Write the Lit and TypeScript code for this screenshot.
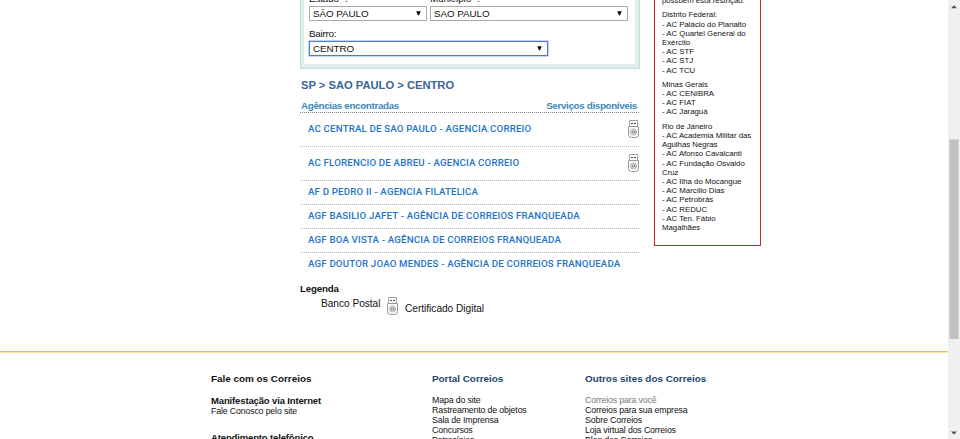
import { LitElement, html, css, svg } from "lit";
import { customElement } from "lit/decorators.js";
import { classMap } from "lit/directives/class-map.js";

const AGENCIES = [
  { name: "AC CENTRAL DE SAO PAULO - AGENCIA CORREIO", digital: true },
  { name: "AC FLORENCIO DE ABREU - AGENCIA CORREIO", digital: true },
  { name: "AF D PEDRO II - AGENCIA FILATELICA", digital: false },
  { name: "AGF BASILIO JAFET - AGÊNCIA DE CORREIOS FRANQUEADA", digital: false },
  { name: "AGF BOA VISTA - AGÊNCIA DE CORREIOS FRANQUEADA", digital: false },
  { name: "AGF DOUTOR JOAO MENDES - AGÊNCIA DE CORREIOS FRANQUEADA", digital: false },
];

const RESTRICTED = [
  ["possuem esta restrição."],
  ["Distrito Federal:", "- AC Palácio do Planalto", "- AC Quartel General do", "Exército", "- AC STF", "- AC STJ", "- AC TCU"],
  ["Minas Gerais", "- AC CENIBRA", "- AC FIAT", "- AC Jaraguá"],
  ["Rio de Janeiro", "- AC Academia Militar das", "Agulhas Negras", "- AC Afonso Cavalcanti", "- AC Fundação Osvaldo", "Cruz", "- AC Ilha do Mocangue", "- AC Marcílio Dias", "- AC Petrobrás", "- AC REDUC", "- AC Ten. Fábio", "Magalhães"],
];

const PORTAL = ["Mapa do site", "Rastreamento de objetos", "Sala de Imprensa", "Concursos", "Patrocínios"];
const SITES = ["Correios para você", "Correios para sua empresa", "Sobre Correios", "Loja virtual dos Correios", "Blog dos Correios"];

@customElement("usb-icon")
class UsbIcon extends LitElement {
  static styles = css`
    :host { display: block; width: 11px; height: 18px; }
    svg { display: block; }
  `;
  render() {
    return html`<svg width="11" height="18" viewBox="0 0 11 18" fill="none">${svg`
      <path d="M1.500 6.500v-6h8v6" fill="#fff" stroke="#999" stroke-width=".9"/>
      <path d="M3 3.500h2M6 3.500h2" stroke="#444" stroke-width="1"/>
      <path d="M.5 7q0-.5.5-.5h9q.5 0 .5.5v7.500q0 3-3 3h-4q-3 0-3-3Z" fill="#fafafa" stroke="#8c8c8c" stroke-width=".9"/>
      <circle cx="5.500" cy="12" r="3" stroke="#999" stroke-width=".8"/>
      <circle cx="5.400" cy="12" r="1.300" stroke="#666" stroke-width=".9"/>
      <path d="M6.800 10.700v2q.8.900 1.500-.3" stroke="#777" stroke-width=".7"/>`}</svg>`;
  }
}

@customElement("select-box")
class SelectBox extends LitElement {
  static properties = { value: {} };
  declare value: string;
  static styles = css`
    :host { display: flex; box-sizing: border-box; align-items: center; justify-content: space-between;
      border: 1px solid #a9a9a9; background: #fff; padding: 0 5px 0 3px; height: 15px;
      font: 9.800px/13px "Liberation Sans", Arial, sans-serif; letter-spacing: -.05px; color: #111; }
    :host([focused]) { border-color: #4d7cc9; box-shadow: 0 0 0 .6px #9dbcf0; }
    svg { display: block; }
  `;
  render() {
    return html`<span>${this.value}</span><svg width="5" height="5" viewBox="0 0 5 5"><path d="M.3.3h4.400L3 4.300H2Z" fill="#000"/></svg>`;
  }
}

@customElement("app-root")
class AppRoot extends LitElement {
  static styles = css`
    :host { display: flex; width: 960px; height: 439px; overflow: hidden; background: #fff;
      font-family: "Liberation Sans", Arial, sans-serif; font-size: 10.100px; color: #111; }
    * { box-sizing: border-box; }
    div, span { white-space: nowrap; }
    .page { width: 948px; display: flex; flex-direction: column; overflow: hidden; }
    .content { height: 351px; flex: none; display: flex; padding-left: 300px; gap: 14px; align-items: flex-start; }
    .main { width: 340px; }
    .form { height: 69px; border: solid #c2dedb; border-width: 0 1px 1px; background: #dfeeed; padding: 0 4px 4px 3px; }
    .fields { background: #fff; height: 64px; padding-left: 5px; }
    .labels { display: flex; height: 6px; line-height: 12px; font-size: 9.800px; letter-spacing: -.1px; }
    .labels span { margin-top: -7px; width: 121px; }
    .selects { display: flex; gap: 3px; }
    .state { width: 118px; }
    .city { width: 198px; }
    .district { width: 239px; }
    .label { height: 20px; line-height: 12px; padding-top: 7px; font-size: 9.800px; letter-spacing: -.25px; }
    .crumb { height: 31px; line-height: 32px; padding-left: 1px; font-size: 11.200px; font-weight: bold; color: #3a6699; }
    .titles { height: 13px; display: flex; justify-content: space-between; line-height: 12px; padding: 0 2px 0 1px; font-weight: bold; font-size: 9.800px; letter-spacing: -.33px; color: #4088b8; border-bottom: 1px dotted #888; width: 339px; }
    .row { width: 339px; height: 24px; display: flex; align-items: center; justify-content: space-between; padding: 0 0 2px 8px;
      border-bottom: 1px dotted #b5b5b5; font: 500 9.700px/12px Roboto, sans-serif; letter-spacing: .17px; color: #2474c8; }
    .row.tall { height: 34px; }
    .row:last-child { border-bottom: 0; }
    .legend-title { font-weight: bold; font-size: 9.700px; letter-spacing: -.15px; line-height: 14px; margin-top: 5px; }
    .legend { display: flex; padding-left: 21px; padding-top: 1px; line-height: 14px; }
    .legend usb-icon { margin: 0 7px 0 6.500px; }
    .legend .cert { padding-top: 5px; }
    .aside { width: 107px; height: 246px; border: solid #c62828; border-width: 0 1px 1px; padding-left: 7px;
      font-size: 7.800px; line-height: 9.170px; }
    .group { margin-bottom: 5.300px; }
    .group:first-child { margin-top: -4px; }
    .footer { flex: none; height: 88px; border-top: 1px solid #f2c344; box-shadow: inset 0 1px #fbe2a0; display: flex; padding: 21px 0 0 211px; font-size: 8.800px; letter-spacing: -.16px; line-height: 10px; }
    .contact { width: 221px; }
    .portal { width: 153px; }
    .heading { font-size: 9.900px; letter-spacing: 0; font-weight: bold; line-height: 12px; margin-bottom: 10px; }
    .portal .heading, .sites .heading { color: #1c456e; }
    .sub { font-weight: bold; font-size: 9.500px; letter-spacing: -.14px; line-height: 11px; }
    .sub.next { margin-top: 16px; }
    .muted { color: #777; }
    .scroll { width: 12px; background: #f0f0f0; display: flex; flex-direction: column; align-items: center; }
    .thumb { width: 10px; height: 200px; background: #c1c1c1; border: solid #d4d4d4; border-width: 1px 1px 0; margin: 130px 0 92px; flex: none; }
    .arrow { display: block; flex: none; margin-top: 5px; }
  `;

  render() {
    return html`
      <div class="page">
        <div class="content">
          <div class="main">
            <div class="form"><div class="fields">
              <div class="labels"><span>Estado *:</span><span>Município *:</span></div>
              <div class="selects"><select-box class="state" .value=${"SÃO PAULO"}></select-box><select-box class="city" .value=${"SAO PAULO"}></select-box></div>
              <div class="label">Bairro:</div>
              <select-box class="district" focused .value=${"CENTRO"}></select-box>
            </div></div>
            <div class="crumb">SP &gt; SAO PAULO &gt; CENTRO</div>
            <div class="titles"><span>Agências encontradas</span><span>Serviços disponíveis</span></div>
            <div>${AGENCIES.map((a) => html`<div class=${classMap({ row: true, tall: a.digital })}><span>${a.name}</span>${a.digital ? html`<usb-icon></usb-icon>` : ""}</div>`)}</div>
            <div class="legend-title">Legenda</div>
            <div class="legend"><span>Banco Postal</span><usb-icon></usb-icon><span class="cert">Certificado Digital</span></div>
          </div>
          <div class="aside">${RESTRICTED.map((g) => html`<div class="group">${g.map((t) => html`<div>${t}</div>`)}</div>`)}</div>
        </div>
        <div class="footer">
          <div class="contact">
            <div class="heading">Fale com os Correios</div>
            <div class="sub">Manifestação via Internet</div>
            <div>Fale Conosco pelo site</div>
            <div class="sub next">Atendimento telefônico</div>
          </div>
          <div class="portal"><div class="heading">Portal Correios</div>${PORTAL.map((t) => html`<div>${t}</div>`)}</div>
          <div class="sites"><div class="heading">Outros sites dos Correios</div>${SITES.map((t, i) => html`<div class=${classMap({ muted: i === 0 })}>${t}</div>`)}</div>
        </div>
      </div>
      <div class="scroll">
        <svg class="arrow" width="6" height="4" viewBox="0 0 6 4"><path d="M0 3.200 3 .2l3 3Z" fill="#505050"/></svg>
        <div class="thumb"></div>
        <svg width="6" height="4" viewBox="0 0 6 4"><path d="m0 .5 3 3 3-3Z" fill="#505050"/></svg>
      </div>`;
  }
}
